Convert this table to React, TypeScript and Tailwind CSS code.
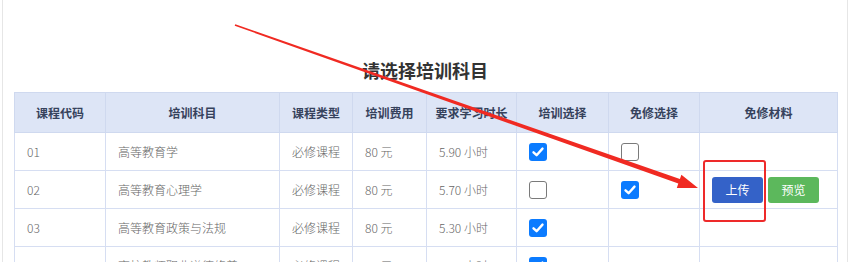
import React from "react";

type Row = {
  code: string;
  name: string;
  type: string;
  fee: string;
  hours: string;
  train: boolean;
  exempt: boolean | null;
  buttons?: boolean;
};

const rows: Row[] = [
  { code: "01", name: "高等教育学", type: "必修课程", fee: "80 元", hours: "5.90 小时", train: true, exempt: false },
  { code: "02", name: "高等教育心理学", type: "必修课程", fee: "80 元", hours: "5.70 小时", train: false, exempt: true, buttons: true },
  { code: "03", name: "高等教育政策与法规", type: "必修课程", fee: "80 元", hours: "5.30 小时", train: true, exempt: null },
  { code: "04", name: "高校教师职业道德修养", type: "必修课程", fee: "80 元", hours: "4.50 小时", train: true, exempt: null },
];

function Box({ checked }: { checked: boolean }) {
  if (checked) {
    return (
      <div className="w-[18px] h-[18px] rounded-[3px] bg-[#0b7bff] flex items-center justify-center">
        <svg width="14" height="14" viewBox="0 0 14 14">
          <path d="M2.5 7.3 L5.6 10.2 L11.5 3.6" fill="none" stroke="#fff" strokeWidth="2.4" strokeLinecap="round" strokeLinejoin="round" />
        </svg>
      </div>
    );
  }
  return <div className="w-[18px] h-[18px] rounded-[3px] bg-white border border-[#7a7a7a]" />;
}

const th = "border border-[#cfd9ef] font-bold text-[12px] text-[#36425c] text-center align-middle";
const td = "border border-[#d6def2] text-[12px] font-light text-[#666] align-middle pl-3";

export default function App() {
  return (
    <div className="w-[852px] h-[269px] bg-white" style={{ fontFamily: '"Noto Sans CJK SC", "Noto Sans", sans-serif' }}>
      <div className="relative h-[262px] overflow-hidden ml-[2px] mr-[4px] border-l border-r border-[#e6e6e6]">
        <div className="pt-[57px] h-[92px] text-center text-[18px] font-bold text-[#333] leading-[26px]">请选择培训科目</div>
        <table className="ml-[11px] border-collapse table-fixed" style={{ width: 823 }}>
          <colgroup>
            <col style={{ width: 91 }} />
            <col style={{ width: 174 }} />
            <col style={{ width: 73 }} />
            <col style={{ width: 74 }} />
            <col style={{ width: 90 }} />
            <col style={{ width: 92 }} />
            <col style={{ width: 91 }} />
            <col style={{ width: 138 }} />
          </colgroup>
          <thead>
            <tr className="h-[40px] bg-[#dde5f6]">
              <th className={th}>课程代码</th>
              <th className={th}>培训科目</th>
              <th className={th}>课程类型</th>
              <th className={th}>培训费用</th>
              <th className={th}>要求学习时长</th>
              <th className={th}>培训选择</th>
              <th className={th}>免修选择</th>
              <th className={th}>免修材料</th>
            </tr>
          </thead>
          <tbody>
            {rows.map((r) => (
              <tr key={r.code} className="h-[38px]">
                <td className={td}>{r.code}</td>
                <td className={td}>{r.name}</td>
                <td className={td}>{r.type}</td>
                <td className={td}>{r.fee}</td>
                <td className={td}>{r.hours}</td>
                <td className={td}>
                  <Box checked={r.train} />
                </td>
                <td className={td}>{r.exempt === null ? null : <Box checked={r.exempt} />}</td>
                <td className={td}>
                  {r.buttons ? (
                    <div className="flex gap-[5px]">
                      <div className="w-[51px] h-[26px] rounded-[3px] bg-[#3462c8] text-white text-[12px] font-normal flex items-center justify-center">上传</div>
                      <div className="w-[51px] h-[26px] rounded-[3px] bg-[#5cb85c] text-white text-[12px] font-normal flex items-center justify-center">预览</div>
                    </div>
                  ) : null}
                </td>
              </tr>
            ))}
          </tbody>
        </table>
        <svg className="absolute left-[-3px] top-0 pointer-events-none" width="852" height="262" viewBox="0 0 852 262">
          <polygon points="234.7,25.8 235.3,24.2 679.9,179.1 681.4,174.7 698,188 676.8,187.9 678.3,183.5" fill="#f02a22" />
          <rect x="704" y="161" width="61" height="60" rx="2" fill="none" stroke="#ee2a2a" strokeWidth="2" />
        </svg>
      </div>
    </div>
  );
}
